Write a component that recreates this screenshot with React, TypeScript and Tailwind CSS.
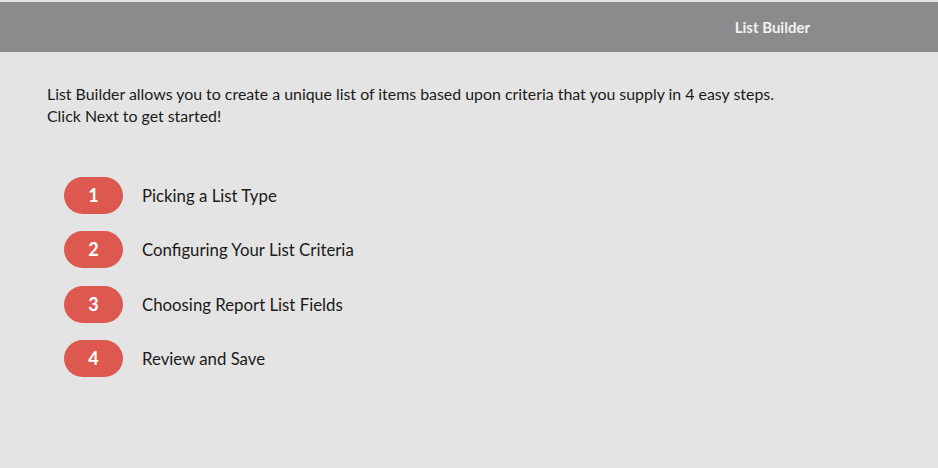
const steps = [
  'Picking a List Type',
  'Configuring Your List Criteria',
  'Choosing Report List Fields',
  'Review and Save',
];

export default function App() {
  return (
    <div className="h-[468px] w-full bg-[#e4e4e4] pt-[2px] font-['Lato','Liberation_Sans',sans-serif] text-[#1a1a1a]">
      <header className="flex h-[50px] items-center justify-end bg-[#8b8b8b] pr-[128px]">
        <h1 className="text-[15px] font-bold text-[#f2f2f2]">List Builder</h1>
      </header>

      <main className="px-[47px] pt-[31px]">
        <p className="text-[15.9px] leading-[22px]">
          List Builder allows you to create a unique list of items based upon criteria that you supply in 4 easy steps.
          <br />
          Click Next to get started!
        </p>

        <ol className="mt-[50px] flex flex-col gap-[17.4px] pl-[17px]">
          {steps.map((label, i) => (
            <li key={label} className="flex items-center gap-[19px]">
              <span className="flex h-[37px] w-[59px] items-center justify-center rounded-full bg-[#dd5950] text-[18px] font-bold text-white">
                {i + 1}
              </span>
              <span className="text-[16.8px]">{label}</span>
            </li>
          ))}
        </ol>
      </main>
    </div>
  );
}
